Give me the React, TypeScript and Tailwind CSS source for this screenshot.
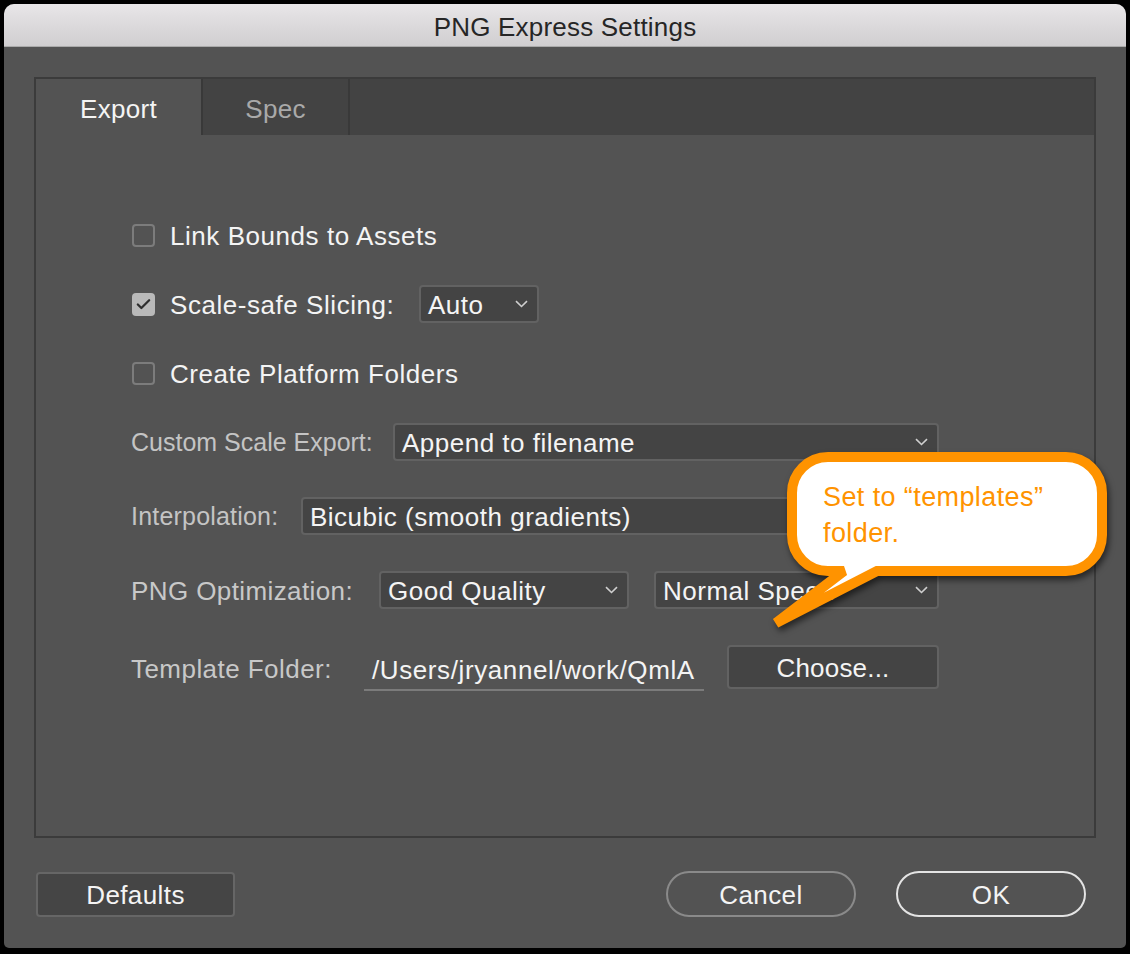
import { Check } from "lucide-react";

const FONT = { fontFamily: '"Liberation Sans", Arial, sans-serif' };

function Chevron() {
  return (
    <svg width="13" height="8" viewBox="0 0 13 8" className="shrink-0">
      <path d="M1 1.2 L6.5 6.5 L12 1.2" fill="none" stroke="#cfcfcf" strokeWidth="1.6" />
    </svg>
  );
}

function Select({ value, width }: { value: string; width: string }) {
  return (
    <div
      className={`${width} h-[38px] flex items-center justify-between pl-[7px] pr-[9px] bg-[#444444] border-2 border-[#626262] rounded-[4px] text-[26px] tracking-[0.5px] text-[#f4f4f4] overflow-hidden`}
    >
      <span className="whitespace-nowrap pt-[2px]">{value}</span>
      <Chevron />
    </div>
  );
}

function Checkbox({ checked }: { checked?: boolean }) {
  return checked ? (
    <div className="w-[23px] h-[23px] rounded-[4px] bg-[#b9b9b9] flex items-center justify-center shrink-0">
      <Check className="w-[17px] h-[17px] text-[#2e2e2e]" strokeWidth={3.2} />
    </div>
  ) : (
    <div className="w-[23px] h-[23px] rounded-[4px] border-2 border-[#7c7c7c] shrink-0" />
  );
}

export default function App() {
  return (
    <div className="relative w-[1130px] h-[954px] bg-black pt-[4px] pl-[4px]" style={FONT}>
      {/* Window */}
      <div className="w-[1122px] h-[944px] flex flex-col rounded-t-[10px] rounded-b-[5px] overflow-hidden bg-[#535353]">
        {/* Title bar */}
        <div className="h-[43px] shrink-0 flex items-center justify-center pt-[5px] bg-gradient-to-b from-[#e8e6e8] to-[#d0ced0] border-b border-[#aaaaaa] text-[26px] tracking-[0.2px] text-[#262626]">
          PNG Express Settings
        </div>

        <div className="flex-1 flex flex-col pt-[30px] px-[30px]">
          {/* Tabbed panel */}
          <div className="h-[761px] flex flex-col border-2 border-[#3b3b3b]">
            <div className="h-[56px] shrink-0 flex bg-[#434343] text-[26px] tracking-[0.3px]">
              <div className="w-[165px] flex items-center justify-center pt-[5px] bg-[#535353] text-[#f4f4f4]">
                Export
              </div>
              <div className="w-[2px] bg-[#393939]" />
              <div className="w-[145px] flex items-center justify-center pt-[5px] text-[#a9a9a9]">
                Spec
              </div>
              <div className="w-[2px] bg-[#393939]" />
            </div>

            <div className="flex flex-col pl-[96px] pt-[81px]">
              {/* Link Bounds */}
              <div className="h-[38px] flex items-center">
                <Checkbox />
                <span className="ml-[15px] pt-[2px] text-[26px] tracking-[0.55px] text-[#f4f4f4]">Link Bounds to Assets</span>
              </div>

              {/* Scale-safe */}
              <div className="h-[38px] mt-[31px] flex items-center">
                <div className="w-[287px] flex items-center">
                  <Checkbox checked />
                  <span className="ml-[15px] pt-[2px] text-[26px] tracking-[0.55px] text-[#f4f4f4]">Scale-safe Slicing:</span>
                </div>
                <Select value="Auto" width="w-[120px]" />
              </div>

              {/* Platform folders */}
              <div className="h-[38px] mt-[31px] flex items-center">
                <Checkbox />
                <span className="ml-[15px] pt-[2px] text-[26px] tracking-[0.55px] text-[#f4f4f4]">Create Platform Folders</span>
              </div>

              {/* Custom scale */}
              <div className="h-[38px] mt-[31px] flex items-center -ml-[1px]">
                <div className="w-[262px] pt-[2px] text-[25px] text-[#c4c4c4]">Custom Scale Export:</div>
                <Select value="Append to filename" width="w-[546px]" />
              </div>

              {/* Interpolation */}
              <div className="h-[38px] mt-[36px] flex items-center -ml-[1px]">
                <div className="w-[170px] pt-[2px] text-[25px] tracking-[0.2px] text-[#c4c4c4]">Interpolation:</div>
                <Select value="Bicubic (smooth gradients)" width="w-[638px]" />
              </div>

              {/* PNG optimization */}
              <div className="h-[38px] mt-[36px] flex items-center -ml-[1px]">
                <div className="w-[248px] pt-[2px] text-[26px] tracking-[0.4px] text-[#c8c8c8]">PNG Optimization:</div>
                <Select value="Good Quality" width="w-[250px]" />
                <div className="ml-[25px]">
                  <Select value="Normal Speed" width="w-[285px]" />
                </div>
              </div>

              {/* Template folder */}
              <div className="h-[46px] mt-[36px] flex items-center -ml-[1px]">
                <div className="w-[233px] pt-[2px] text-[26px] tracking-[0.45px] text-[#c8c8c8]">Template Folder:</div>
                <div className="w-[340px] h-[46px] flex items-center pl-[8px] pt-[6px] border-b-2 border-[#7b7b7b] overflow-hidden whitespace-nowrap text-[26px] tracking-[0.6px] text-[#f4f4f4]">
                  /Users/jryannel/work/QmlA
                </div>
                <div className="ml-[23px] w-[212px] h-[44px] -mt-[2px] flex items-center justify-center pt-[2px] bg-[#444444] border-2 border-[#626262] rounded-[4px] text-[26px] tracking-[0.2px] text-[#f4f4f4]">
                  Choose...
                </div>
              </div>
            </div>
          </div>

          {/* Bottom buttons */}
          <div className="mt-[33px] h-[46px] flex items-center ml-[2px] pr-[10px] text-[26px] tracking-[0.4px] text-[#f4f4f4]">
            <div className="w-[199px] h-[45px] flex items-center justify-center pt-[2px] bg-[#454545] border-2 border-[#666666] rounded-[4px]">
              Defaults
            </div>
            <div className="flex-1" />
            <div className="w-[190px] h-[46px] flex items-center justify-center pt-[2px] rounded-full border-2 border-[#8a8a8a]">
              Cancel
            </div>
            <div className="ml-[40px] w-[190px] h-[46px] flex items-center justify-center pt-[2px] rounded-full border-2 border-[#e4e4e4]">
              OK
            </div>
          </div>
        </div>
      </div>

      {/* Callout annotation */}
      <svg
        className="absolute left-[760px] top-[440px]"
        width="360"
        height="200"
        viewBox="0 0 360 200"
        style={{ filter: "drop-shadow(2px 4px 3px rgba(0,0,0,0.55))" }}
      >
        <path
          d="M68 17 H306 A36 36 0 0 1 342 53 V95 A36 36 0 0 1 306 131 H117 L16 183 L84 131 H68 A36 36 0 0 1 32 95 V53 A36 36 0 0 1 68 17 Z"
          fill="#ffffff"
          stroke="#ff9300"
          strokeWidth="10"
          strokeLinejoin="miter"
          strokeMiterlimit="3"
        />
      </svg>
      <div className="absolute left-[823px] top-[479px] text-[27px] leading-[36px] tracking-[0.4px] text-[#ff9300]">
        Set to “templates”
        <br />
        folder.
      </div>
    </div>
  );
}
